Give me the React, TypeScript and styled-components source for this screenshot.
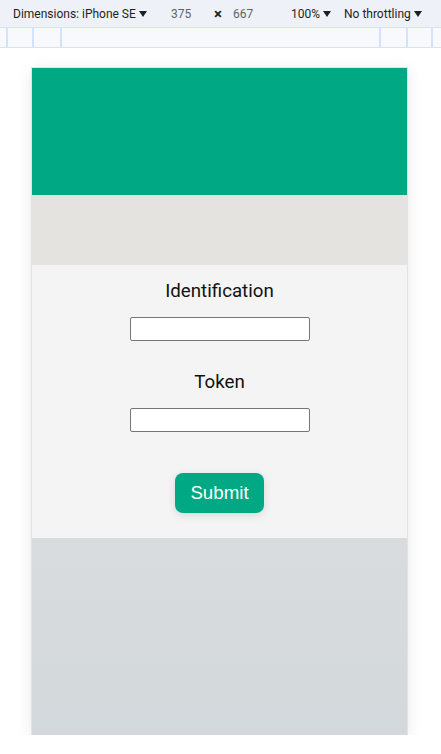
import React from "react";
import styled, { createGlobalStyle } from "styled-components";

const Global = createGlobalStyle`
  html, body { margin: 0; padding: 0; background: #ffffff; }
  body { font-family: Roboto, "Liberation Sans", Arial, sans-serif; }
`;

const Toolbar = styled.div`
  background: #eef1f8;
  border-bottom: 1px solid #d3e3fd;
  font-family: Roboto, "Liberation Sans", sans-serif;
  font-size: 12px;
  color: #1f1f1f;
  box-sizing: border-box;
  height: 28px;
  position: relative;
`;

const ToolItem = styled.span<{ $left: number; $muted?: boolean }>`
  position: absolute;
  left: ${(p) => p.$left}px;
  top: 7px;
  color: ${(p) => (p.$muted ? "#5f6368" : "#1f1f1f")};
  display: flex;
  align-items: center;
  gap: 3px;
  white-space: nowrap;
`;

const Times = styled.span`
  position: absolute;
  left: 214px;
  top: 5px;
  font-size: 15px;
  font-weight: 700;
  color: #1f1f1f;
`;

const Caret = styled.span`
  width: 0;
  height: 0;
  border-left: 4px solid transparent;
  border-right: 4px solid transparent;
  border-top: 6px solid #1f1f1f;
  display: inline-block;
`;

const Ruler = styled.div`
  height: 20px;
  box-sizing: border-box;
  background: #f8f9fd;
  border-bottom: 1px solid #d3e3fd;
  display: flex;
  justify-content: space-between;
`;

const RulerGroup = styled.div`
  display: flex;
`;

const Tick = styled.div<{ $w: number }>`
  width: ${(p) => p.$w}px;
  height: 100%;
  border-right: 2px solid #d3e3fd;
  box-sizing: border-box;
`;

const TickR = styled.div<{ $w: number }>`
  width: ${(p) => p.$w}px;
  height: 100%;
  border-left: 2px solid #d3e3fd;
  box-sizing: border-box;
`;

const Stage = styled.div`
  padding: 20px 0 0 32px;
`;

const Device = styled.div`
  width: 375px;
  height: 667px;
  outline: 1px solid #e3e3e3;
  box-shadow: 0 2px 14px rgba(0, 0, 0, 0.1);
  display: flex;
  flex-direction: column;
`;

const Banner = styled.div`
  height: 127px;
  background: #00a884;
`;

const Strip = styled.div`
  height: 70px;
  background: #e4e3df;
`;

const Form = styled.form`
  height: 273px;
  box-sizing: border-box;
  background: #f4f4f4;
  display: flex;
  flex-direction: column;
  align-items: center;
  padding-top: 15px;
`;

const Label = styled.label<{ $top: number }>`
  font-family: Roboto, sans-serif;
  font-size: 18.72px;
  line-height: 22px;
  color: #111;
  margin-top: ${(p) => p.$top}px;
  margin-bottom: 15px;
`;

const Input = styled.input`
  width: 180px;
  height: 24px;
  box-sizing: border-box;
  border: 1px solid #767676;
  border-radius: 2px;
  background: #fff;
  padding: 1px 2px;
`;

const Button = styled.button`
  margin-top: 41px;
  width: 89px;
  height: 40px;
  border: none;
  border-radius: 8px;
  background: #00a884;
  color: #fff;
  font-family: "Liberation Sans", Arial, sans-serif;
  font-size: 18.72px;
  box-shadow: 0 2px 8px rgba(0, 0, 0, 0.12);
  cursor: pointer;
`;

const Footer = styled.div`
  flex: 1;
  background: linear-gradient(#d8dcdd, #d3d8dc);
`;

export default function App() {
  return (
    <>
      <Global />
      <Toolbar>
        <ToolItem $left={13}>
          Dimensions: iPhone SE <Caret />
        </ToolItem>
        <ToolItem $left={171} $muted>375</ToolItem>
        <Times>×</Times>
        <ToolItem $left={233} $muted>667</ToolItem>
        <ToolItem $left={291}>
          100% <Caret />
        </ToolItem>
        <ToolItem $left={344}>
          No throttling <Caret />
        </ToolItem>
      </Toolbar>
      <Ruler>
        <RulerGroup>
          <Tick $w={8} />
          <Tick $w={26} />
          <Tick $w={28} />
        </RulerGroup>
        <RulerGroup>
          <TickR $w={27} />
          <TickR $w={25} />
          <TickR $w={10} />
        </RulerGroup>
      </Ruler>
      <Stage>
        <Device>
          <Banner />
          <Strip />
          <Form onSubmit={(e) => e.preventDefault()}>
            <Label $top={0}>Identification</Label>
            <Input type="text" />
            <Label $top={30}>Token</Label>
            <Input type="text" />
            <Button type="submit">Submit</Button>
          </Form>
          <Footer />
        </Device>
      </Stage>
    </>
  );
}
